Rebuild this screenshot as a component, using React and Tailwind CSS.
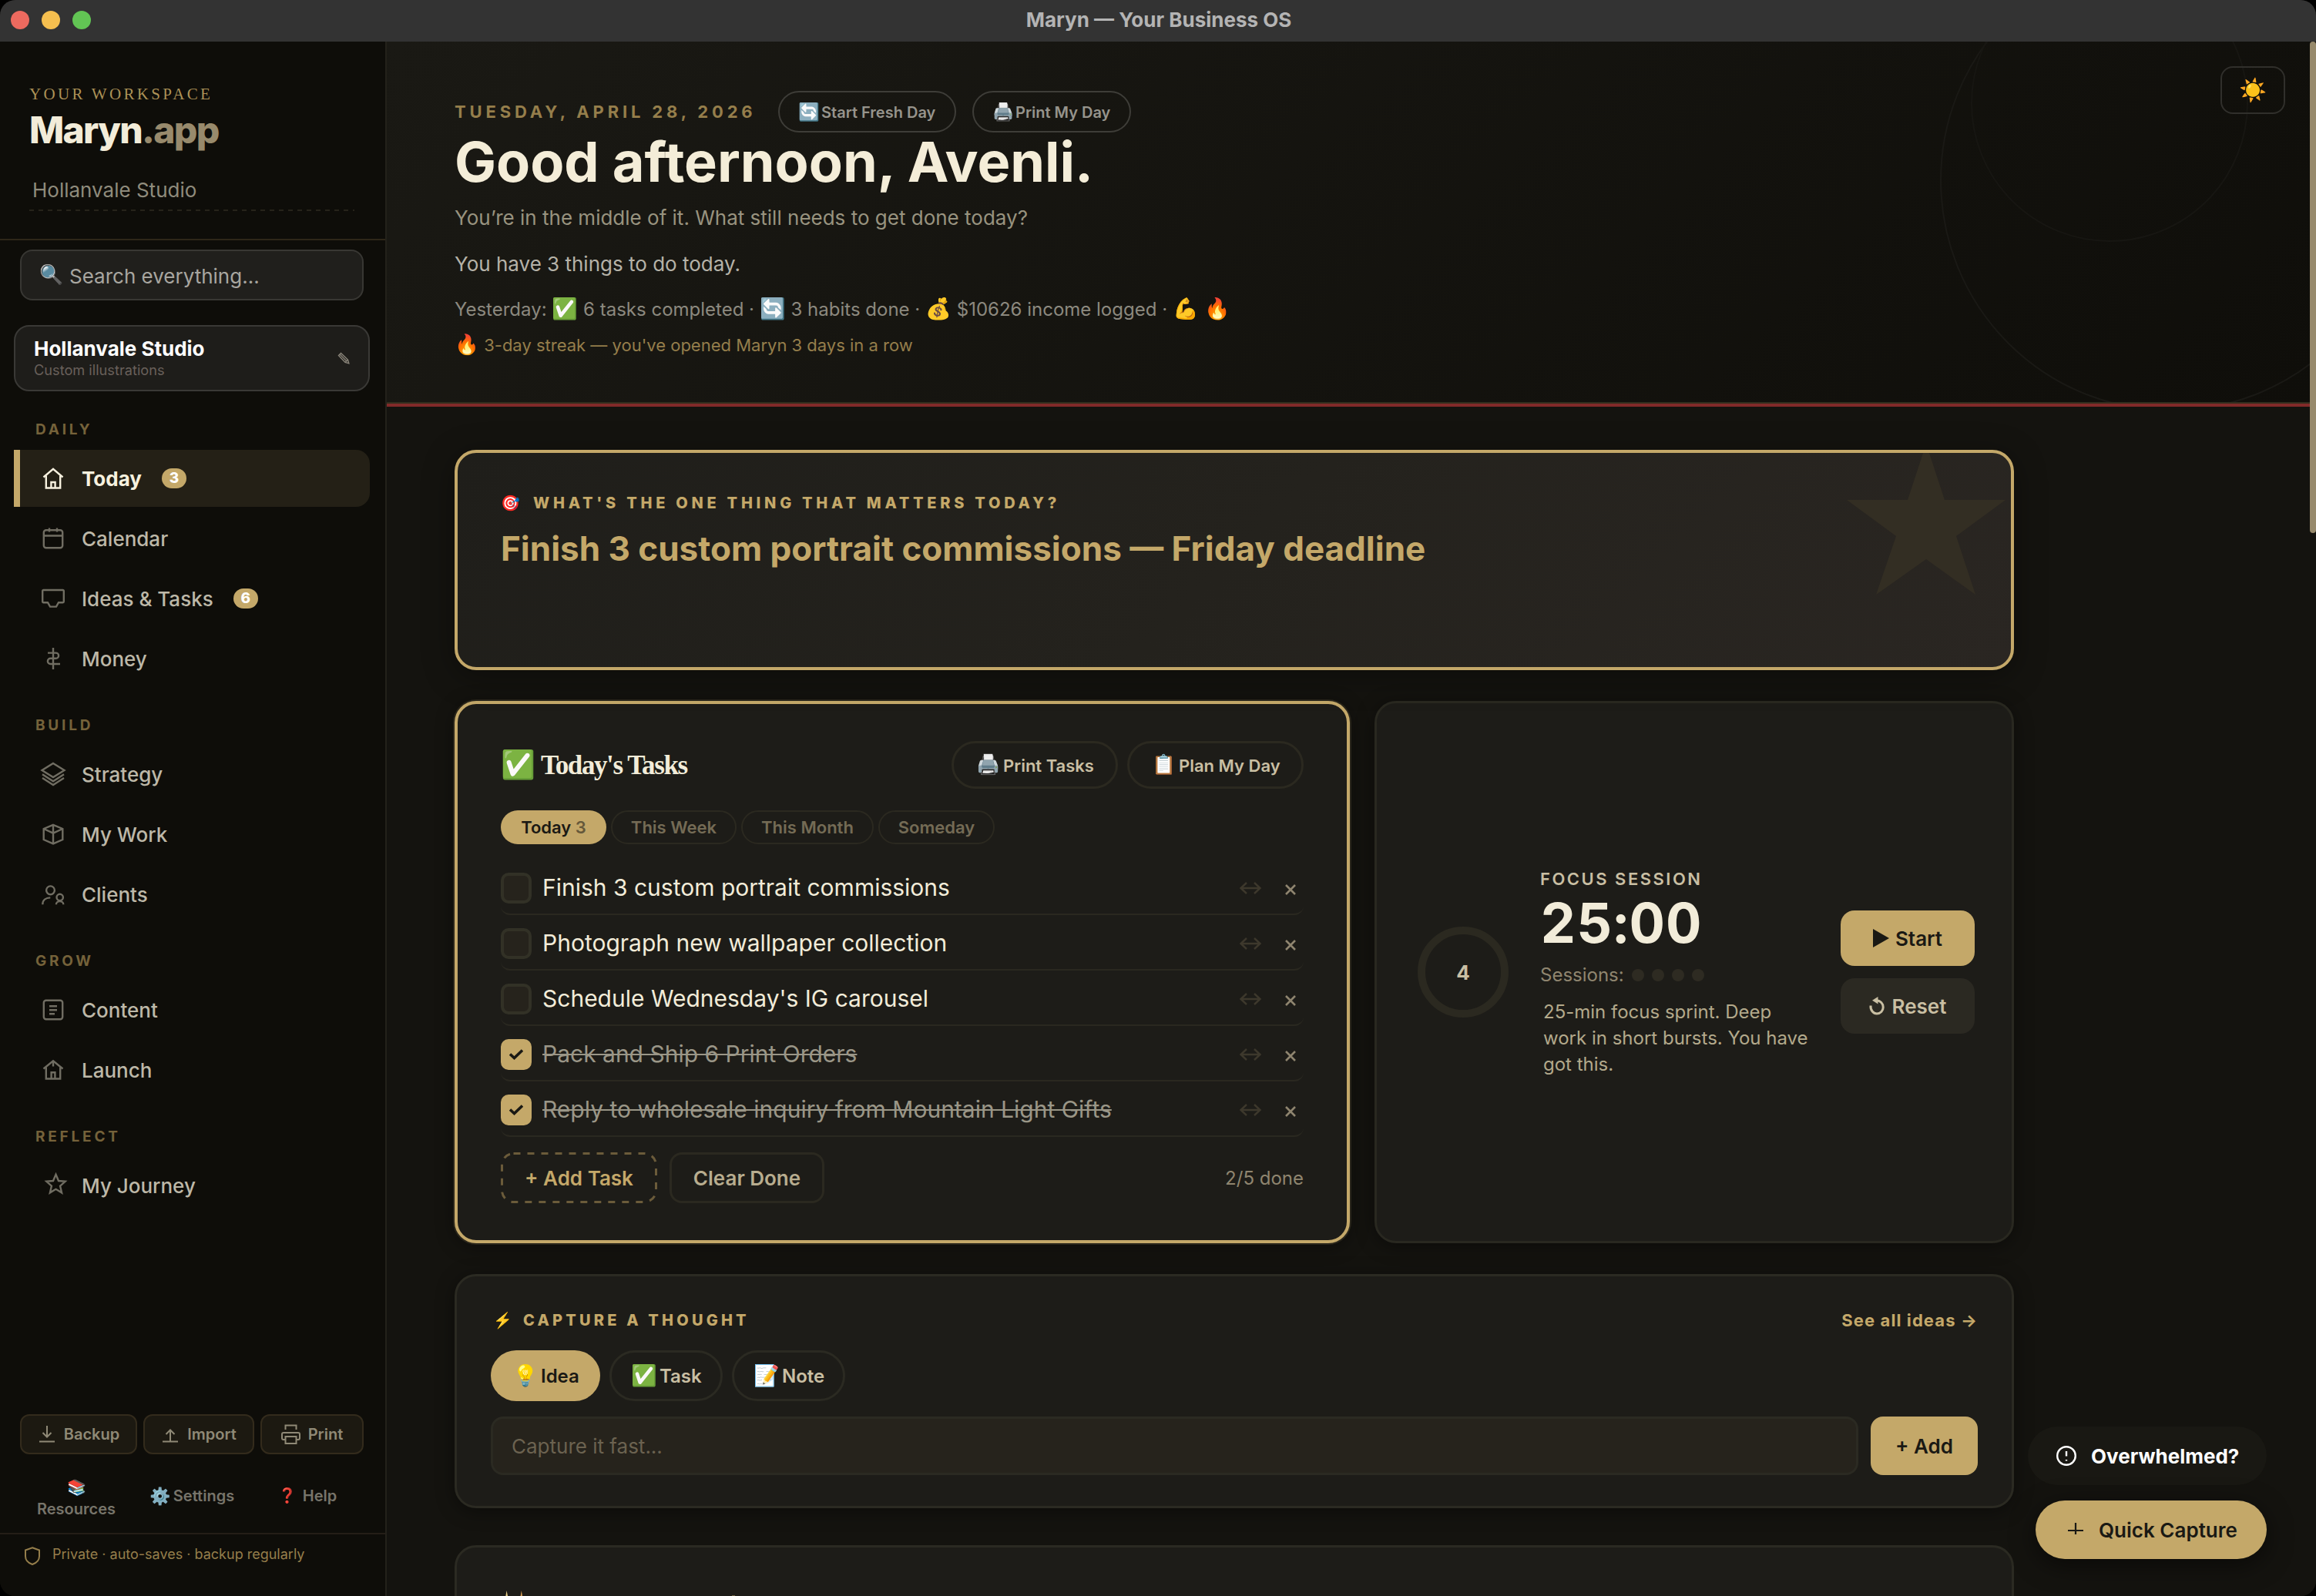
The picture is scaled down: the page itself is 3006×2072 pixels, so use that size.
import React, { useState } from 'react';
import { clsx } from 'clsx';

const navIcons = {
  home: (
    <>
      <path d="M2.5 13.5 15 2.8l12.5 10.7" />
      <path d="M5.8 11.5V27.5h18.4V11.5" />
      <path d="M12.4 27.5v-7.5h5.2v7.5" />
    </>
  ),
  calendar: (
    <>
      <rect x="2.8" y="4.2" width="24.4" height="23" rx="3" />
      <path d="M2.8 11.5h24.4M10 1.6v5M20 1.6v5" />
    </>
  ),
  inbox: <path d="M2.4 4h25.2a1.2 1.2 0 0 1 1.2 1.2V19a1.2 1.2 0 0 1-1.2 1.2H22l-3 5.4h-8l-3-5.4H2.4A1.2 1.2 0 0 1 1.2 19V5.2a1.2 1.2 0 0 1 1.2-1.2Z" />,
  money: <path d="M15 1v28M8 7.6h10.5a3.6 3.6 0 0 1 0 7.2h-7a3.6 3.6 0 0 0 0 7.2H24" />,
  layers: (
    <>
      <path d="M15 1 29.5 10 15 19 .5 10Z" />
      <path d="M1 15.2 15 24.2l14-9" />
      <path d="M1 20 15 29l14-9" />
    </>
  ),
  box: (
    <>
      <path d="M15 2.8 27.3 8v14L15 27.4 2.7 22V8Z" />
      <path d="M2.7 8 15 13.6 27.3 8M15 2.8v24.6" />
    </>
  ),
  clients: (
    <>
      <circle cx="11.5" cy="9.8" r="5.4" />
      <path d="M1.3 28.2c0-5.6 4.2-8.8 10-8.8" />
      <circle cx="23.7" cy="19" r="4.2" />
      <path d="M18.9 28.2c0-5.4 9.4-5.4 9.4 0" />
    </>
  ),
  content: (
    <>
      <rect x="2.8" y="2.8" width="24.4" height="24.4" rx="3" />
      <path d="M10 10.2h10M10 15.2h10M10 20.2h7" />
    </>
  ),
  launch: (
    <>
      <path d="M2.5 13.5 15 3.2l12.5 10.3" />
      <path d="M5.8 11.5v15h18.4v-15" />
      <path d="M12.6 26.5v-8.2h4.8v8.2M15 4v6.5" />
    </>
  ),
  star: <path d="m18.5.8 3.5 8.2 8.7.8-6.6 5.9 2 8.7-7.6-4.6-7.6 4.6 2-8.7L6.3 9.8l8.7-.8Z" />,
};

const navGroups = [
  {
    label: 'DAILY',
    items: [
      { icon: 'home', label: 'Today', badge: 3 },
      { icon: 'calendar', label: 'Calendar' },
      { icon: 'inbox', label: 'Ideas & Tasks', badge: 6 },
      { icon: 'money', label: 'Money' },
    ],
  },
  {
    label: 'BUILD',
    items: [
      { icon: 'layers', label: 'Strategy' },
      { icon: 'box', label: 'My Work' },
      { icon: 'clients', label: 'Clients' },
    ],
  },
  {
    label: 'GROW',
    items: [
      { icon: 'content', label: 'Content' },
      { icon: 'launch', label: 'Launch' },
    ],
  },
  { label: 'REFLECT', items: [{ icon: 'star', label: 'My Journey' }] },
];

const initialTasks = [
  { id: 1, text: 'Finish 3 custom portrait commissions', done: false },
  { id: 2, text: 'Photograph new wallpaper collection', done: false },
  { id: 3, text: "Schedule Wednesday's IG carousel", done: false },
  { id: 4, text: 'Pack and Ship 6 Print Orders', done: true },
  { id: 5, text: 'Reply to wholesale inquiry from Mountain Light Gifts', done: true },
];

function TitleBar() {
  return (
    <div className="flex h-[54px] items-center bg-[#333333] px-[14px] pb-[2px]">
      <div className="flex w-[200px] gap-4">
        <span className="size-6 rounded-full bg-[#ed6a5f]" />
        <span className="size-6 rounded-full bg-[#f5bf4f]" />
        <span className="size-6 rounded-full bg-[#62c554]" />
      </div>
      <div className="flex-1 pb-px text-center text-[26px] font-bold text-[#b4b4b4]">Maryn — Your Business OS</div>
      <div className="w-[198px]" />
    </div>
  );
}

function NavItem({ item, active, onClick }) {
  return (
    <button
      onClick={onClick}
      className={clsx(
        'flex h-[74px] items-center rounded-r-[18px] border-l-8 pl-7 text-left text-[26px]',
        active ? 'border-[#c4a869] bg-[#242016] font-bold text-[#f7f1df]' : 'border-transparent font-medium text-[#bdb8a8]'
      )}
    >
      <svg
        viewBox="0 0 30 30"
        className={clsx('mr-[22px] size-[30px] shrink-0 overflow-visible', active ? 'text-[#f7f1df]' : 'text-[#706d62]')}
        fill="none"
        stroke="currentColor"
        strokeWidth="2.4"
      >
        {navIcons[item.icon]}
      </svg>
      {item.label}
      {item.badge && (
        <span className="ml-[26px] flex h-[26px] w-8 items-center justify-center rounded-full bg-[#c4a869] text-[19px] font-extrabold text-white">
          {item.badge}
        </span>
      )}
    </button>
  );
}

function Sidebar() {
  const [active, setActive] = useState('Today');

  return (
    <aside className="flex w-[502px] shrink-0 flex-col border-r-2 border-[#23211a] bg-[#0e0d09]">
      <div className="border-b-2 border-[#2e2719] px-[38px] pt-[54px] pb-9">
        <div className="h-7 font-['Liberation_Serif',serif] text-[21px] leading-7 tracking-[3.3px] text-[#ac9257]">
          YOUR WORKSPACE
        </div>
        <div className="mt-1 h-[57px] text-[48px] leading-[57px] font-extrabold tracking-[-1.7px] text-[#f2ecd9]">
          Maryn<span className="text-[#988a6c]">.app</span>
        </div>
        <div className="mt-[33px] pb-2 pl-1 text-[26px] leading-[34px] text-[#8f8b7c]">Hollanvale Studio</div>
        <div className="mr-[2px] h-[2px] bg-[repeating-linear-gradient(90deg,#26231a_0_6px,transparent_6px_12px)]" />
      </div>

      <div className="mr-7 ml-[26px] mt-3 flex h-[66px] items-center rounded-2xl border-2 border-[#383733] bg-[#201f1c] pl-[23px] text-[26px] text-[#a8a6a0]">
        <span className="w-[39px] text-[25px]">🔍</span>
        <span className="pt-[2px]">Search everything...</span>
      </div>

      <div className="mr-5 ml-[18px] mt-8 flex h-[86px] items-center justify-between rounded-[20px] border-2 border-[#3a3936] bg-[#1e1d1a] px-6">
        <div>
          <div className="text-[26px] leading-[30px] font-bold text-white">Hollanvale Studio</div>
          <div className="text-[18.2px] leading-6 text-[#69605a]">Custom illustrations</div>
        </div>
        {/* small pencil, tip at the lower right */}
        <svg viewBox="0 0 16 16" className="size-4" fill="none" stroke="#8a857a" strokeWidth="1.4">
          <path d="M1.500 4.500 4.500 1.500 13.500 10 14.800 14.800 10 13.500ZM3 3l9 9M10 13.500 13.500 10" />
        </svg>
      </div>

      <nav className="flex flex-col">
        {navGroups.map((group) => (
          <div key={group.label} className="flex flex-col">
            <div className="mt-9 mb-3 h-7 pl-[46px] text-[19px] leading-7 font-bold tracking-[3.8px] text-[#75623a]">
              {group.label}
            </div>
            <div className="mr-5 ml-[18px] flex flex-col gap-1">
              {group.items.map((item) => (
                <NavItem key={item.label} item={item} active={active === item.label} onClick={() => setActive(item.label)} />
              ))}
            </div>
          </div>
        ))}
      </nav>

      <div className="mt-auto flex h-[52px] gap-2 pl-[26px] text-[20px] font-semibold text-[#8f8976]">
        <button className="flex w-[152px] items-center justify-center gap-3 rounded-xl border-2 border-[#332b1c] bg-[#1c1911] pl-[2px]">
          <svg viewBox="0 0 20 22" className="h-[22px] w-5" fill="none" stroke="currentColor" strokeWidth="2">
            <path d="M10 0v14M4.5 9 10 14.5 15.5 9M0 20.5h20" />
          </svg>
          Backup
        </button>
        <button className="flex w-36 items-center justify-center gap-3 rounded-xl border-2 border-[#332b1c] bg-[#1c1911] pl-[2px]">
          <svg viewBox="0 0 20 22" className="h-[22px] w-5" fill="none" stroke="currentColor" strokeWidth="2">
            <path d="M10 20V6M4.5 11 10 5.5 15.5 11M0 20.5h20" />
          </svg>
          Import
        </button>
        <button className="flex w-[134px] items-center justify-center gap-[10px] rounded-xl border-2 border-[#332b1c] bg-[#1c1911]">
          <svg viewBox="0 0 25 26" className="h-[26px] w-[25px]" fill="none" stroke="currentColor" strokeWidth="2">
            <path d="M5.5 7V1.5h14V7M5.5 20H3a2 2 0 0 1-2-2v-5a2 2 0 0 1 2-2h19a2 2 0 0 1 2 2v5a2 2 0 0 1-2 2h-2.5M5.5 16h14v9h-14Z" />
          </svg>
          Print
        </button>
      </div>
      <div className="flex h-[102px] items-center pl-[26px] text-[20px] leading-7 font-semibold text-[#77746a]">
        <button className="w-[146px] pt-3">
          <span className="block text-[20px]">📚</span>
          Resources
        </button>
        <button className="flex w-[154px] items-center justify-center gap-1 pt-[6px]">
          <span className="text-[22px]">⚙️</span>
          Settings
        </button>
        <button className="flex w-[146px] items-center justify-center gap-2 pt-[6px]">
          <span className="text-[19px]">❓</span>
          Help
        </button>
      </div>
      <div className="flex h-[82px] items-start border-t-2 border-[#241e17] pt-[15px] pl-8 text-[18px] leading-[22px] text-[#957e4b]">
        <svg viewBox="0 0 20 24" className="mt-px mr-4 h-6 w-5" fill="none" stroke="currentColor" strokeWidth="2">
          <path d="M10 1.2 19 4.5v8c0 5-3.5 8.6-9 10.5-5.5-1.9-9-5.5-9-10.5v-8Z" />
        </svg>
        Private · auto-saves · backup regularly
      </div>
    </aside>
  );
}

function Emoji({ children }) {
  return <span className="text-[27px] leading-none">{children}</span>;
}

function Hero() {
  return (
    <header className="relative h-[474px] overflow-hidden border-b-4 border-[#822a29] bg-linear-135 from-[#1a1914] to-[#0f0e0a]">
      <div className="absolute -top-[120px] -right-[120px] size-[600px] rounded-full border-2 border-[#1a1915]" />
      <div className="absolute -top-[100px] right-20 size-[360px] rounded-full border-2 border-[#171612]" />
      <button className="absolute top-8 right-8 flex h-[62px] w-[84px] items-center justify-center rounded-2xl border-2 border-[#302f2b] text-[29px]">
        ☀️
      </button>

      <div className="relative h-[470px] border-b-2 border-[#332e1e] pt-16 pl-[88px]">
        <div className="flex h-[54px] items-center">
          <div className="w-[420px] text-[22px] font-bold tracking-[4.84px] whitespace-nowrap text-[#957e4b]">TUESDAY, APRIL 28, 2026</div>
          <button className="mr-[21px] flex h-[54px] w-[231px] items-center rounded-full border-2 border-[#3e3d38] pl-[22px] text-[20px] font-semibold text-[#96948c]">
            <span className="w-8 text-[22.5px]">🔄</span>
            <span className="pt-[2px]">Start Fresh Day</span>
          </button>
          <button className="flex h-[54px] w-[206px] items-center rounded-full border-2 border-[#3e3d38] pl-[22px] text-[20px] font-semibold text-[#96948c]">
            <span className="w-8 text-[22.5px]">🖨️</span>
            <span className="pt-[2px]">Print My Day</span>
          </button>
        </div>
        <h1 className="text-[72px] leading-[75px] font-bold text-[#f4edd8]">Good afternoon, Avenli.</h1>
        <p className="mt-4 text-[26px] leading-10 text-[#98937f]">You’re in the middle of it. What still needs to get done today?</p>
        <p className="mt-5 text-[26px] leading-10 text-[#b5b2a8]">You have 3 things to do today.</p>
        <p className="mt-[19px] h-10 text-[24px] leading-10 text-[#8c897f]">
          Yesterday: <Emoji>✅</Emoji> 6 tasks completed · <Emoji>🔄</Emoji> 3 habits done · <Emoji>💰</Emoji> $10626 income logged ·{' '}
          <Emoji>💪</Emoji> <Emoji>🔥</Emoji>
        </p>
        <p className="mt-2 text-[22px] leading-9 text-[#957e4b]">
          <span className="text-[25.5px] leading-none">🔥</span> 3-day streak — you've opened Maryn 3 days in a row
        </p>
      </div>
    </header>
  );
}

function OneThing() {
  return (
    <section className="relative h-[286px] overflow-hidden rounded-[28px] border-4 border-[#c4a869] bg-linear-135 from-[#1f1e1a] via-[#24221d] to-[#2a2622] pt-[49px] pl-14 text-[#c4a869] shadow-[0_8px_40px_rgba(0,0,0,0.35)]">
      <svg viewBox="0 0 206 196" className="absolute -top-3 right-[7px] h-[196px] w-[206px]" fill="#332e23">
        <path d="M103 0 127 73H206L142 120 167 196 103 150 38 196 64 120 0 73H79Z" />
      </svg>
      <div className="relative flex h-8 items-center text-[20px] font-extrabold tracking-[4.75px]">
        <span className="w-[42px]">🎯</span>
        WHAT'S THE ONE THING THAT MATTERS TODAY?
      </div>
      <h2 className="relative mt-[15px] text-[44px] leading-[56px] font-bold">Finish 3 custom portrait commissions — Friday deadline</h2>
    </section>
  );
}

function TaskRow({ task, onToggle }) {
  return (
    <div className="flex h-[70px] items-center rounded-xl border-b-2 border-[#2a2820]">
      <button
        onClick={onToggle}
        className={clsx(
          'mt-px mr-[14px] flex size-10 items-center justify-center rounded-[10px] border-4',
          task.done ? 'border-[#c4a869] bg-[#c4a869]' : 'border-[#323126] bg-[#26231c]'
        )}
      >
        {task.done && (
          <svg viewBox="0 0 18 14" className="h-[14px] w-[18px] shrink-0" fill="none" stroke="#1a1914" strokeWidth="3.6">
            <path d="M1 6.5 6.5 11.5 17 1.5" />
          </svg>
        )}
      </button>
      <span className={clsx('flex-1 text-[30px]', task.done ? 'text-[#9a9687] line-through decoration-2' : 'text-[#f2ecd9]')}>{task.text}</span>
      <svg viewBox="0 0 28 16" className="mt-[2px] mr-[31px] h-4 w-7" fill="none" stroke="#3d382c" strokeWidth="2.4">
        <path d="M1.5 8h25M9 1 1.5 8 9 15M19 1l7.5 7-7.5 7" />
      </svg>
      <svg viewBox="0 0 14 14" className="mt-[5px] mr-[10px] size-[14px]" fill="none" stroke="#8f856f" strokeWidth="2.6">
        <path d="m1 1 12 12M13 1 1 13" />
      </svg>
    </div>
  );
}

function TasksCard() {
  const [tasks, setTasks] = useState(initialTasks);
  const doneCount = tasks.filter((t) => t.done).length;

  const toggle = (id) => setTasks(tasks.map((t) => (t.id === id ? { ...t, done: !t.done } : t)));

  return (
    <section className="w-[1162px] rounded-[28px] border-4 border-[#c4a869] bg-[#1d1c18] px-14 pt-12 shadow-[0_0_0_2px_#2a261b,0_4px_24px_rgba(0,0,0,0.4)]">
      <div className="flex h-[62px] items-center">
        <h3 className="flex flex-1 items-center font-['Liberation_Serif',serif] text-[35px] font-bold tracking-[-1.4px] text-[#f2ecd9]">
          <span className="w-[52px] text-[36px]">✅</span>
          <span className="pt-[2px]">Today's Tasks</span>
        </h3>
        <button className="mr-3 flex h-[62px] w-[216px] items-center rounded-full border-[3px] border-[#2b2920] pl-[25px] text-[22px] font-semibold text-[#c9bfa3]">
          <span className="w-[39px] text-[25px]">🖨️</span>
          <span className="pt-[2px]">Print Tasks</span>
        </button>
        <button className="flex h-[62px] w-[229px] items-center rounded-full border-[3px] border-[#2b2920] pl-[25px] text-[22px] font-semibold text-[#c9bfa3]">
          <span className="w-[39px] text-[25px]">📋</span>
          <span className="pt-[2px]">Plan My Day</span>
        </button>
      </div>

      <div className="mt-7 flex h-11 gap-[6px] text-[22px] font-semibold text-[#746b55]">
        <button className="w-[137px] rounded-full bg-[#c4a869] text-[#1a1914]">
          Today <span className="text-[#65583a]">3</span>
        </button>
        <button className="w-[163px] rounded-full border-2 border-[#2b2920]">This Week</button>
        <button className="w-[172px] rounded-full border-2 border-[#2b2920]">This Month</button>
        <button className="w-[151px] rounded-full border-2 border-[#2b2920]">Someday</button>
      </div>

      <div className="mt-[22px] flex flex-col gap-[2px]">
        {tasks.map((task) => (
          <TaskRow key={task.id} task={task} onToggle={() => toggle(task.id)} />
        ))}
      </div>

      <div className="mt-5 flex h-[66px] items-center text-[26px]">
        <button className="relative mr-4 h-[66px] w-[203px] font-semibold text-[#c4a869]">
          <svg className="absolute inset-0 size-full" fill="none" stroke="#6b5b3a" strokeWidth="3" strokeDasharray="9 9">
            <rect x="1.5" y="1.5" width="200" height="63" rx="15" />
          </svg>
          + Add Task
        </button>
        <button className="h-[66px] w-[201px] rounded-2xl border-[3px] border-[#2b2920] font-semibold text-[#b8ad8f]">Clear Done</button>
        <span className="ml-auto pt-px text-[24px] text-[#8f856f]">
          {doneCount}/{tasks.length} done
        </span>
      </div>
    </section>
  );
}

function FocusCard() {
  return (
    <section className="flex w-[830px] items-center rounded-[28px] border-[3px] border-[#292820] bg-[#1d1c18] pl-[53px] shadow-[0_4px_24px_rgba(0,0,0,0.4)]">
      <div className="flex size-[118px] items-center justify-center rounded-full border-[10px] border-[#2b2920] text-[26px] font-bold text-[#c9bfa3]">4</div>
      <div className="ml-[41px] w-[390px]">
        <div className="text-[22px] leading-8 font-semibold tracking-[2.5px] text-[#c9bfa3]">FOCUS SESSION</div>
        <div className="-mt-px text-[72px] leading-[84px] font-bold tracking-[1px] text-[#f2ecd9] tabular-nums">25:00</div>
        <div className="mt-[10px] flex h-8 items-center text-[24px] text-[#8f856f]">
          Sessions:
          <span className="ml-[10px] flex gap-[10px]">
            {[0, 1, 2, 3].map((i) => (
              <span key={i} className="size-4 rounded-full bg-[#2e2b22]" />
            ))}
          </span>
        </div>
        <p className="mt-[15px] w-[360px] pl-1 text-[24px] leading-[34px] text-[#b3a98b]">25-min focus sprint. Deep work in short bursts. You have got this.</p>
      </div>
      <div className="flex w-[174px] flex-col gap-4 text-[26px] font-semibold">
        <button className="flex h-[72px] items-center justify-center gap-2 rounded-[18px] bg-[#c4a869] text-[#1a1914]">
          <svg viewBox="0 0 21 24" className="h-6 w-[21px]" fill="currentColor">
            <path d="M0 0 21 12 0 24Z" />
          </svg>
          Start
        </button>
        <button className="flex h-[72px] items-center justify-center gap-[10px] rounded-[18px] bg-[#2b2922] text-[#c9bfa3]">
          <svg viewBox="0 0 20 24" className="h-6 w-5" fill="none" stroke="currentColor" strokeWidth="3">
            <path d="M2 11.5c-.5 6 3.5 10.5 8 10.5 4.8 0 8.2-3.8 8.2-8.3 0-5-3.7-8.5-8.2-8.9" />
            <path d="M11.5 0v9.6L4 4.8Z" fill="currentColor" stroke="none" />
          </svg>
          Reset
        </button>
      </div>
    </section>
  );
}

function CaptureCard() {
  return (
    <section className="mt-10 h-[304px] rounded-[28px] border-[3px] border-[#2b2a22] bg-[#1d1c18] px-11 pt-[40px] shadow-[0_4px_24px_rgba(0,0,0,0.4)]">
      <div className="flex h-[34px] items-center text-[#c4a869]">
        <span className="w-[42px] pl-[3px] text-[20px]">⚡</span>
        <span className="flex-1 text-[20px] font-extrabold tracking-[4.2px]">CAPTURE A THOUGHT</span>
        <button className="text-[22px] font-bold tracking-[1.1px]">See all ideas →</button>
      </div>
      <div className="mt-[22px] flex h-[66px] gap-3 text-[24px] font-semibold text-[#c9bfa3]">
        <button className="flex w-[142px] items-center rounded-full bg-[#c4a869] pl-6 text-[#1a1914]">
          <span className="w-[41px] text-[27px]">💡</span>
          <span className="pt-[2px]">Idea</span>
        </button>
        <button className="flex w-[147px] items-center rounded-full border-[3px] border-[#2b2a22] pl-[21px]">
          <span className="w-[41px] text-[27px]">✅</span>
          <span className="pt-[2px]">Task</span>
        </button>
        <button className="flex w-[147px] items-center rounded-full border-[3px] border-[#2b2a22] pl-[21px]">
          <span className="w-[41px] text-[27px]">📝</span>
          <span className="pt-[2px]">Note</span>
        </button>
      </div>
      <div className="mt-5 flex h-[76px] gap-4 text-[26px]">
        <input
          className="w-[1775px] rounded-2xl border-[3px] border-[#2b2a22] bg-[#26231c] px-6 placeholder:text-[#6b6250]"
          placeholder="Capture it fast..."
        />
        <button className="w-[139px] rounded-2xl bg-[#c4a869] font-semibold text-[#1a1914]">+ Add</button>
      </div>
    </section>
  );
}

// Only the very top of this card is above the fold
function NextCard() {
  return (
    <section className="mt-12 h-[304px] rounded-[28px] border-[3px] border-[#2b2a22] bg-[#1d1c18] pt-14 pl-[60px]">
      <svg viewBox="0 0 304 8" className="h-2 w-[304px]">
        <path d="M4.6 0 6.2 8H3.2Z" fill="#e8cf8a" />
        <path d="M23.8 0 25.2 8H22.4Z" fill="#d39a52" />
        <path d="M297 6.5h4V8h-4Z" fill="#c4a869" />
      </svg>
    </section>
  );
}

export default function App() {
  return (
    <div className="h-[2072px] w-[3006px] overflow-hidden bg-black font-['Inter','Liberation_Sans',sans-serif]">
      <div className="relative h-full overflow-hidden rounded-[20px] bg-[#14130f]">
        <TitleBar />
        <div className="flex h-[2018px]">
          <Sidebar />
          <main className="w-[2496px] overflow-hidden bg-[#14130f]">
            <Hero />
            <div className="mt-14 ml-[88px] w-[2024px]">
              <OneThing />
              <div className="mt-10 flex h-[704px] gap-8">
                <TasksCard />
                <FocusCard />
              </div>
              <CaptureCard />
              <NextCard />
            </div>
          </main>
          <div className="w-2 bg-[#14130f]">
            <div className="h-[638px] rounded-full bg-[#978a6c]" />
          </div>
        </div>

        <div className="absolute right-16 bottom-12 flex flex-col items-end gap-5 text-[26px]">
          <button className="flex h-[76px] w-[310px] items-center rounded-full bg-[#191813] pl-[37px] font-bold text-white">
            <svg viewBox="0 0 26 26" className="mr-[19px] size-[26px]" fill="none" stroke="currentColor" strokeWidth="2.4">
              <circle cx="13" cy="13" r="11.8" />
              <path d="M13 7v6.5M13 18v1.5" />
            </svg>
            Overwhelmed?
          </button>
          <button className="flex h-[76px] w-[300px] items-center rounded-full bg-[#c4a869] pl-[42px] font-semibold text-[#1a1914] shadow-[0_8px_32px_rgba(0,0,0,0.5)]">
            <svg viewBox="0 0 20 20" className="mr-5 size-5" fill="none" stroke="currentColor" strokeWidth="2.2">
              <path d="M10 1v15M0 11h20" />
            </svg>
            Quick Capture
          </button>
        </div>
      </div>
    </div>
  );
}
